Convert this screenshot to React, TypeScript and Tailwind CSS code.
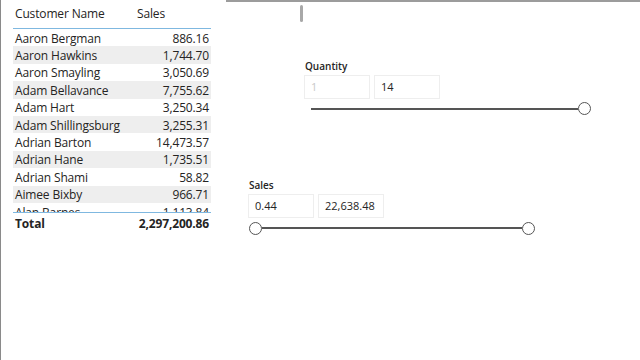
import React from "react";

const rows: [string, string][] = [
  ["Aaron Bergman", "886.16"],
  ["Aaron Hawkins", "1,744.70"],
  ["Aaron Smayling", "3,050.69"],
  ["Adam Bellavance", "7,755.62"],
  ["Adam Hart", "3,250.34"],
  ["Adam Shillingsburg", "3,255.31"],
  ["Adrian Barton", "14,473.57"],
  ["Adrian Hane", "1,735.51"],
  ["Adrian Shami", "58.82"],
  ["Aimee Bixby", "966.71"],
  ["Alan Barnes", "1,113.84"],
];

const font = { fontFamily: '"Segoe UI", "Open Sans", "Noto Sans", sans-serif' };

function Thumb() {
  return <div className="w-[13px] h-[13px] rounded-full border border-[#555] bg-white shrink-0" />;
}

export default function App() {
  return (
    <div className="relative w-[640px] h-[360px] bg-white overflow-hidden border-l border-[#8a8a8a]" style={font}>
      <div className="absolute top-0 left-[225px] right-0 h-[2px] bg-[#9c9c9c]" />
      <div className="absolute top-[5px] left-[299px] w-[3px] h-[17px] rounded-full bg-[#a8a8a8]" />

      {/* Table */}
      <div className="absolute left-[12px] top-0 w-[198px] text-[12px] text-[#252423] tracking-[-0.15px]">
        <div className="flex h-[28px] items-center pl-[2px]">
          <span className="w-[122px]">Customer Name</span>
          <span>Sales</span>
        </div>
        <div className="h-[1px] bg-[#7fb8e0]" />
        <div className="h-[183px] overflow-hidden">
          {rows.map(([n, v], i) => (
            <div
              key={n}
              className={`flex h-[17.4px] items-center justify-between pl-[2px] pr-[2px] pt-[2px] ${i % 2 === 1 ? "bg-[#eeeeee]" : "bg-white"}`}
            >
              <span>{n}</span>
              <span>{v}</span>
            </div>
          ))}
        </div>
        <div className="h-[1px] bg-[#7fb8e0]" />
        <div className="flex h-[21px] items-center justify-between pl-[2px] pr-[2px] font-bold">
          <span>Total</span>
          <span>2,297,200.86</span>
        </div>
      </div>

      {/* Quantity slicer */}
      <div className="absolute left-[303px] top-[58px] w-[290px] text-[#252423]">
        <div className="text-[10px] font-semibold h-[17px] leading-[17px] pl-[1px]">Quantity</div>
        <div className="flex gap-[4px]">
          <div className="w-[66px] h-[24px] border border-[#eeeeee] text-[11px] text-[#c8c8c8] flex items-center pl-[6px]">1</div>
          <div className="w-[66px] h-[24px] border border-[#eeeeee] text-[11px] flex items-center pl-[6px]">14</div>
        </div>
        <div className="flex items-center h-[19px] pl-[7px]">
          <div className="w-[267px] h-[2px] bg-[#555]" />
          <Thumb />
        </div>
      </div>

      {/* Sales slicer */}
      <div className="absolute left-[247px] top-[177px] w-[300px] text-[#252423]">
        <div className="text-[10px] font-semibold h-[17px] leading-[17px] pl-[1px]">Sales</div>
        <div className="flex gap-[4px]">
          <div className="w-[66px] h-[24px] border border-[#eeeeee] text-[11px] flex items-center pl-[6px]">0.44</div>
          <div className="w-[66px] h-[24px] border border-[#eeeeee] text-[11px] flex items-center pl-[6px]">22,638.48</div>
        </div>
        <div className="flex items-center h-[20px] pl-[1px]">
          <Thumb />
          <div className="w-[260px] h-[2px] bg-[#555]" />
          <Thumb />
        </div>
      </div>
    </div>
  );
}
